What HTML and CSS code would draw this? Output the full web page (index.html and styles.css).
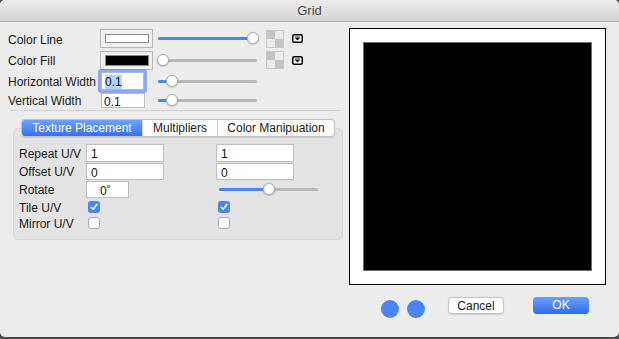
FILE: index.html
```html
<!DOCTYPE html>
<html>
<head>
<meta charset="utf-8">
<link rel="stylesheet" href="styles.css">
</head>
<body>
<div class="window">
  <div class="titlebar">Grid</div>
  <div class="content">
    <div class="left">
      <div class="props">
        <span class="lbl">Color Line</span>
        <div class="well"><div class="swatch white"></div></div>
        <div class="slider"><div class="track"><div class="fill" style="width:95px"></div></div><div class="knob" style="left:89px"></div></div>
        <div class="checker"></div>
        <svg class="dd" width="11" height="9" viewBox="0 0 11 9"><rect x="0.75" y="0.75" width="9.5" height="7.5" rx="1.5" fill="#fff" stroke="#000" stroke-width="1.5"/><rect x="3" y="2.6" width="5" height="0.9" fill="#000"/><polygon points="3,4 8,4 5.5,6.4" fill="#000"/></svg>

        <span class="lbl">Color Fill</span>
        <div class="well end"><div class="swatch black"></div></div>
        <div class="slider"><div class="track"><div class="fill" style="width:0px"></div></div><div class="knob" style="left:-1px"></div></div>
        <div class="checker"></div>
        <svg class="dd" width="11" height="9" viewBox="0 0 11 9"><rect x="0.75" y="0.75" width="9.5" height="7.5" rx="1.5" fill="#fff" stroke="#000" stroke-width="1.5"/><rect x="3" y="2.6" width="5" height="0.9" fill="#000"/><polygon points="3,4 8,4 5.5,6.4" fill="#000"/></svg>

        <span class="lbl">Horizontal Width</span>
        <div class="field focus"><span class="sel">0.1</span></div>
        <div class="slider"><div class="track"><div class="fill" style="width:14px"></div></div><div class="knob" style="left:8px"></div></div>
        <span></span><span></span>

        <span class="lbl">Vertical Width</span>
        <div class="field vw">0.1</div>
        <div class="slider"><div class="track"><div class="fill" style="width:14px"></div></div><div class="knob" style="left:8px"></div></div>
        <span></span><span></span>
      </div>
      <div class="sep"></div>
      <div class="group">
        <div class="tabs">
          <div class="tab active t1">Texture Placement</div>
          <div class="tab t2">Multipliers</div>
          <div class="tab t3">Color Manipuation</div>
        </div>
        <div class="tgrid">
          <span class="lbl">Repeat U/V</span>
          <div class="field wide">1</div>
          <div class="field wide">1</div>

          <span class="lbl">Offset U/V</span>
          <div class="field wide low">0</div>
          <div class="field wide low">0</div>

          <span class="lbl">Rotate</span>
          <div class="field rot low">0˚</div>
          <div class="slider rs"><div class="track"><div class="fill" style="width:50px"></div></div><div class="knob" style="left:44px"></div></div>

          <span class="lbl">Tile U/V</span>
          <div class="cb checked"><svg width="12" height="12" viewBox="0 0 12 12"><path d="M3.2 6.3 L5.1 8.3 L8.8 3.4" fill="none" stroke="#fff" stroke-width="1.6" stroke-linecap="round" stroke-linejoin="round"/></svg></div>
          <div class="cb checked"><svg width="12" height="12" viewBox="0 0 12 12"><path d="M3.2 6.3 L5.1 8.3 L8.8 3.4" fill="none" stroke="#fff" stroke-width="1.6" stroke-linecap="round" stroke-linejoin="round"/></svg></div>

          <span class="lbl">Mirror U/V</span>
          <div class="cb"></div>
          <div class="cb"></div>
        </div>
      </div>
    </div>
    <div class="right">
      <div class="preview"><div class="canvas"></div></div>
      <div class="buttons">
        <div class="dot"></div>
        <div class="dot"></div>
        <div class="btn cancel">Cancel</div>
        <div class="btn ok">OK</div>
      </div>
    </div>
  </div>
</div>
</body>
</html>
```

FILE: styles.css
```css
html, body {
  margin: 0;
  padding: 0;
}
body {
  background: #4a4a4a;
  font-family: "Liberation Sans", Arial, Helvetica, sans-serif;
  font-size: 12px;
  color: #1b1b1b;
  width: 619px;
  height: 339px;
  overflow: hidden;
}
.window {
  width: 619px;
  height: 337px;
  background: #ececec;
  border-radius: 5px;
  overflow: hidden;
  display: flex;
  flex-direction: column;
}
.titlebar {
  flex: none;
  height: 21px;
  border-bottom: 1px solid #b2b2b2;
  background: linear-gradient(#ececec, #d4d4d4);
  text-align: center;
  line-height: 22px;
  font-size: 13px;
  color: #4b4b4b;
}
.content {
  display: flex;
  flex: 1;
}
.left {
  width: 341px;
  padding: 7px 0 0 8px;
}
.right {
  padding-top: 6px;
}
.lbl {
  align-self: center;
  white-space: nowrap;
  line-height: 14px;
  padding-top: 2px;
}

/* top property grid */
.props {
  display: grid;
  grid-template-columns: 92px 53px 104px 27px 19px;
  grid-template-rows: 19px 20px 18px 16px;
  row-gap: 2px;
}
.well {
  width: 53px;
  height: 19px;
  box-sizing: border-box;
  border: 1px solid #b7b7b7;
  background: #efefef;
  display: flex;
  align-items: center;
  justify-content: center;
}
.well.end {
  align-self: end;
}
.swatch {
  width: 44px;
  box-sizing: border-box;
  border: 1px solid #8c8c8c;
}
.swatch.white {
  height: 9px;
  background: #fff;
}
.swatch.black {
  height: 11px;
  background: #000;
}
.slider {
  position: relative;
  width: 99px;
  height: 13px;
  margin-left: 5px;
  align-self: center;
}
.track {
  margin-top: 5px;
  height: 3px;
  border-radius: 2px;
  background: #b9b9b9;
  overflow: hidden;
}
.fill {
  height: 3px;
  background: #4b86f6;
}
.knob {
  position: absolute;
  top: 0;
  width: 12px;
  height: 12px;
  box-sizing: border-box;
  border-radius: 50%;
  background: #fff;
  border: 0.5px solid #b0b0b0;
  box-shadow: 0 0.5px 1.5px rgba(0, 0, 0, 0.3);
}
.checker {
  justify-self: end;
  align-self: center;
  width: 18px;
  height: 18px;
  box-sizing: border-box;
  border: 1px solid #c9c9c9;
  background: conic-gradient(#ebebeb 0 25%, #c4c4c4 0 50%, #ebebeb 0 75%, #c4c4c4 0);
}
.dd {
  justify-self: end;
  align-self: center;
  display: block;
}

.field {
  background: #fff;
  border: 1px solid #bdbdbd;
  box-sizing: border-box;
  height: 18px;
  line-height: 17px;
  padding-left: 3px;
  padding-top: 1px;
  font-size: 12px;
  color: #111;
}
.field.focus {
  width: 43px;
  margin-left: 1px;
  border-color: #a9b9e0;
  border-radius: 1px;
  box-shadow: 0 0 0 3px rgba(80, 125, 235, 0.6);
}
.sel {
  background: #b4d3fd;
}
.field.vw {
  width: 44px;
  height: 15px;
  line-height: 15px;
  margin-left: 1px;
  align-self: end;
  padding-left: 2px;
  padding-top: 1px;
}

.sep {
  margin: 2px 0 0 2px;
  width: 330px;
  height: 1px;
  background: #d2d2d2;
}

/* group box */
.group {
  margin: 17px 0 0 5px;
  width: 330px;
  height: 112px;
  box-sizing: border-box;
  background: #e3e3e3;
  border: 1px solid #d8d8d8;
  border-radius: 5px;
}
.tabs {
  display: flex;
  width: 314px;
  height: 18px;
  margin: -10px auto 0;
  box-sizing: border-box;
  border: 1px solid #c3c3c3;
  border-radius: 4px;
  background: #fff;
  overflow: hidden;
  box-shadow: 0 0.5px 1px rgba(0, 0, 0, 0.12);
}
.tab {
  text-align: center;
  line-height: 17px;
  font-size: 12px;
  color: #1b1b1b;
  box-sizing: border-box;
}
.tab + .tab {
  border-left: 1px solid #d3d3d3;
}
.t1 { width: 120px; }
.t2 { width: 75px; }
.t3 { flex: 1; }
.tab.active {
  background: linear-gradient(#6ea3fb, #3771f0);
  color: #fff;
}

.tgrid {
  display: grid;
  grid-template-columns: 67px 130px 100px;
  grid-template-rows: 18px 18px 18px 17px 15px;
  margin: 7px 0 0 5px;
}
.field.wide {
  width: 78px;
  padding-left: 4px;
}
.field.low {
  height: 17px;
  margin-top: 1px;
  line-height: 16px;
}
.field.rot {
  width: 43px;
  padding-left: 13px;
}
.slider.rs {
  margin-left: 3px;
}
.cb {
  width: 12px;
  height: 12px;
  box-sizing: border-box;
  border: 1px solid #ababab;
  border-radius: 3px;
  background: #fff;
  margin-left: 2px;
  align-self: center;
}
.cb svg {
  display: block;
}
.cb.checked {
  background: #4a87f6;
  border: none;
}

/* preview */
.preview {
  width: 257px;
  height: 257px;
  box-sizing: border-box;
  border: 1px solid #000;
  background: #fff;
  padding: 13px;
}
.canvas {
  width: 100%;
  height: 100%;
  box-sizing: border-box;
  background: #000;
  border: 1px solid #6e6e6e;
}
.buttons {
  display: flex;
  align-items: flex-start;
  margin-top: 12px;
  padding-left: 32px;
}
.dot {
  width: 18px;
  height: 18px;
  border-radius: 50%;
  background: #4a85f5;
  margin-top: 3px;
}
.dot + .dot {
  margin-left: 8px;
}
.btn {
  width: 56px;
  height: 17px;
  box-sizing: border-box;
  border-radius: 4px;
  text-align: center;
  font-size: 12px;
  line-height: 16px;
}
.cancel {
  margin-left: 23px;
  background: #fff;
  border: 1px solid #c4c4c4;
  box-shadow: 0 0.5px 1px rgba(0, 0, 0, 0.12);
  color: #1b1b1b;
}
.ok {
  margin-left: 29px;
  background: linear-gradient(#6aa2fc, #2f6cf1);
  color: #fff;
  line-height: 17px;
}
```
